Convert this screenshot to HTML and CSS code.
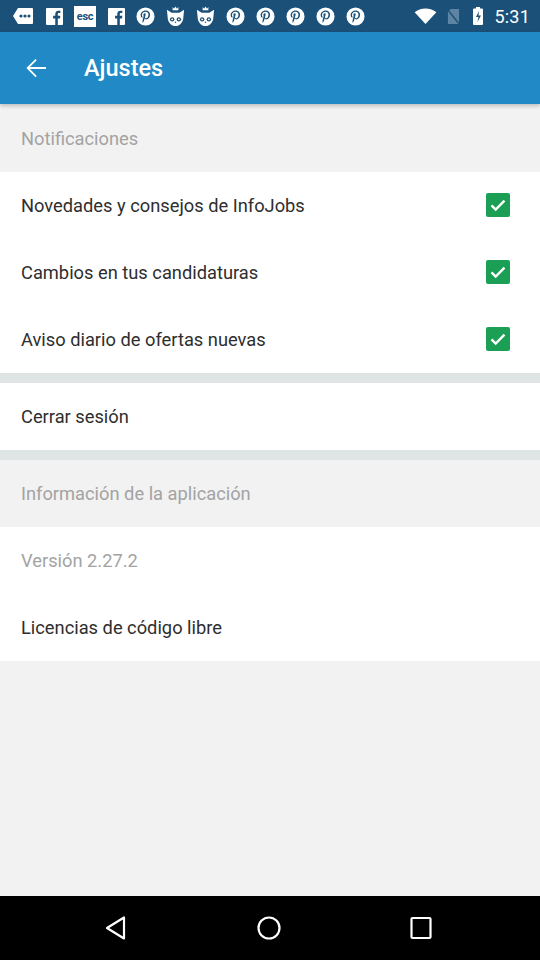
FILE: index.html
```html
<!DOCTYPE html>
<html lang="es">
<head>
<meta charset="utf-8">
<link rel="stylesheet" href="styles.css">
</head>
<body>
<div class="screen">
  <div class="statusbar">
    <div class="notif">
      <svg class="ic msg" viewBox="0 0 22 18"><path d="M6 1h14a1 1 0 0 1 1 1v14a1 1 0 0 1-1 1H6L1 9z" fill="#fff"/><circle cx="9" cy="9" r="1.6" fill="#1b5079"/><circle cx="13" cy="9" r="1.6" fill="#1b5079"/><circle cx="17" cy="9" r="1.6" fill="#1b5079"/></svg>
      <svg class="ic fb" viewBox="0 0 18 18"><rect width="18" height="18" rx="1" fill="#fff"/><path d="M12.5 18v-7h2.3l.4-2.7h-2.7V6.6c0-.8.2-1.3 1.3-1.3h1.4V2.9c-.3 0-1.1-.1-2-.1-2 0-3.4 1.2-3.4 3.5v2H7.5V11h2.3v7z" fill="#1b5079"/></svg>
      <div class="esc">esc</div>
      <svg class="ic fb" viewBox="0 0 18 18"><rect width="18" height="18" rx="1" fill="#fff"/><path d="M12.5 18v-7h2.3l.4-2.7h-2.7V6.6c0-.8.2-1.3 1.3-1.3h1.4V2.9c-.3 0-1.1-.1-2-.1-2 0-3.4 1.2-3.4 3.5v2H7.5V11h2.3v7z" fill="#1b5079"/></svg>
      <svg class="ic pin" viewBox="0 0 20 20"><circle cx="10" cy="10" r="9.5" fill="#fff"/><path d="M10.3 3.8c-3.6 0-5.4 2.6-5.4 4.7 0 1.3.5 2.4 1.5 2.8.2.1.3 0 .4-.2l.1-.6c.1-.2 0-.3-.1-.4-.3-.4-.5-.8-.5-1.5 0-1.9 1.4-3.6 3.7-3.6 2 0 3.1 1.2 3.1 2.9 0 2.2-1 4-2.4 4-.8 0-1.4-.7-1.2-1.5.2-1 .7-2 .7-2.7 0-.6-.3-1.1-1-1.1-.8 0-1.4.8-1.4 1.9 0 .7.2 1.2.2 1.2l-1 4.1c-.3 1.2 0 2.7 0 2.9 0 .1.1.1.2 0 .1-.1 1-1.3 1.3-2.5l.5-2c.3.5 1 .9 1.8.9 2.4 0 4-2.2 4-5.1 0-2.2-1.9-4.2-4.7-4.2z" fill="#1b5079"/></svg>
      <svg class="ic cat" viewBox="0 0 22 22"><path d="M8 1l1.5 2L11 .5 12.5 3 14 1v3.5H8z" fill="#fff"/><path d="M2 4l5 3h8l5-3-.8 8c0 5-4 9-8.2 9S2.8 17 2.8 12z" fill="#fff"/><circle cx="7.5" cy="14" r="2.3" fill="#1b5079"/><circle cx="14.5" cy="14" r="2.3" fill="#1b5079"/><circle cx="7.5" cy="14" r="1" fill="#fff"/><circle cx="14.5" cy="14" r="1" fill="#fff"/><circle cx="11" cy="17" r=".8" fill="#1b5079"/></svg>
      <svg class="ic cat" viewBox="0 0 22 22"><path d="M8 1l1.5 2L11 .5 12.5 3 14 1v3.5H8z" fill="#fff"/><path d="M2 4l5 3h8l5-3-.8 8c0 5-4 9-8.2 9S2.8 17 2.8 12z" fill="#fff"/><circle cx="7.5" cy="14" r="2.3" fill="#1b5079"/><circle cx="14.5" cy="14" r="2.3" fill="#1b5079"/><circle cx="7.5" cy="14" r="1" fill="#fff"/><circle cx="14.5" cy="14" r="1" fill="#fff"/><circle cx="11" cy="17" r=".8" fill="#1b5079"/></svg>
      <svg class="ic pin" viewBox="0 0 20 20"><circle cx="10" cy="10" r="9.5" fill="#fff"/><path d="M10.3 3.8c-3.6 0-5.4 2.6-5.4 4.7 0 1.3.5 2.4 1.5 2.8.2.1.3 0 .4-.2l.1-.6c.1-.2 0-.3-.1-.4-.3-.4-.5-.8-.5-1.5 0-1.9 1.4-3.6 3.7-3.6 2 0 3.1 1.2 3.1 2.9 0 2.2-1 4-2.4 4-.8 0-1.4-.7-1.2-1.5.2-1 .7-2 .7-2.7 0-.6-.3-1.1-1-1.1-.8 0-1.4.8-1.4 1.9 0 .7.2 1.2.2 1.2l-1 4.1c-.3 1.2 0 2.7 0 2.9 0 .1.1.1.2 0 .1-.1 1-1.3 1.3-2.5l.5-2c.3.5 1 .9 1.8.9 2.4 0 4-2.2 4-5.1 0-2.2-1.9-4.2-4.7-4.2z" fill="#1b5079"/></svg>
      <svg class="ic pin" viewBox="0 0 20 20"><circle cx="10" cy="10" r="9.5" fill="#fff"/><path d="M10.3 3.8c-3.6 0-5.4 2.6-5.4 4.7 0 1.3.5 2.4 1.5 2.8.2.1.3 0 .4-.2l.1-.6c.1-.2 0-.3-.1-.4-.3-.4-.5-.8-.5-1.5 0-1.9 1.4-3.6 3.7-3.6 2 0 3.1 1.2 3.1 2.9 0 2.2-1 4-2.4 4-.8 0-1.4-.7-1.2-1.5.2-1 .7-2 .7-2.7 0-.6-.3-1.1-1-1.1-.8 0-1.4.8-1.4 1.9 0 .7.2 1.2.2 1.2l-1 4.1c-.3 1.2 0 2.7 0 2.9 0 .1.1.1.2 0 .1-.1 1-1.3 1.3-2.5l.5-2c.3.5 1 .9 1.8.9 2.4 0 4-2.2 4-5.1 0-2.2-1.9-4.2-4.7-4.2z" fill="#1b5079"/></svg>
      <svg class="ic pin" viewBox="0 0 20 20"><circle cx="10" cy="10" r="9.5" fill="#fff"/><path d="M10.3 3.8c-3.6 0-5.4 2.6-5.4 4.7 0 1.3.5 2.4 1.5 2.8.2.1.3 0 .4-.2l.1-.6c.1-.2 0-.3-.1-.4-.3-.4-.5-.8-.5-1.5 0-1.9 1.4-3.6 3.7-3.6 2 0 3.1 1.2 3.1 2.9 0 2.2-1 4-2.4 4-.8 0-1.4-.7-1.2-1.5.2-1 .7-2 .7-2.7 0-.6-.3-1.1-1-1.1-.8 0-1.4.8-1.4 1.9 0 .7.2 1.2.2 1.2l-1 4.1c-.3 1.2 0 2.7 0 2.9 0 .1.1.1.2 0 .1-.1 1-1.3 1.3-2.5l.5-2c.3.5 1 .9 1.8.9 2.4 0 4-2.2 4-5.1 0-2.2-1.9-4.2-4.7-4.2z" fill="#1b5079"/></svg>
      <svg class="ic pin" viewBox="0 0 20 20"><circle cx="10" cy="10" r="9.5" fill="#fff"/><path d="M10.3 3.8c-3.6 0-5.4 2.6-5.4 4.7 0 1.3.5 2.4 1.5 2.8.2.1.3 0 .4-.2l.1-.6c.1-.2 0-.3-.1-.4-.3-.4-.5-.8-.5-1.5 0-1.9 1.4-3.6 3.7-3.6 2 0 3.1 1.2 3.1 2.9 0 2.2-1 4-2.4 4-.8 0-1.4-.7-1.2-1.5.2-1 .7-2 .7-2.7 0-.6-.3-1.1-1-1.1-.8 0-1.4.8-1.4 1.9 0 .7.2 1.2.2 1.2l-1 4.1c-.3 1.2 0 2.7 0 2.9 0 .1.1.1.2 0 .1-.1 1-1.3 1.3-2.5l.5-2c.3.5 1 .9 1.8.9 2.4 0 4-2.2 4-5.1 0-2.2-1.9-4.2-4.7-4.2z" fill="#1b5079"/></svg>
      <svg class="ic pin" viewBox="0 0 20 20"><circle cx="10" cy="10" r="9.5" fill="#fff"/><path d="M10.3 3.8c-3.6 0-5.4 2.6-5.4 4.7 0 1.3.5 2.4 1.5 2.8.2.1.3 0 .4-.2l.1-.6c.1-.2 0-.3-.1-.4-.3-.4-.5-.8-.5-1.5 0-1.9 1.4-3.6 3.7-3.6 2 0 3.1 1.2 3.1 2.9 0 2.2-1 4-2.4 4-.8 0-1.4-.7-1.2-1.5.2-1 .7-2 .7-2.7 0-.6-.3-1.1-1-1.1-.8 0-1.4.8-1.4 1.9 0 .7.2 1.2.2 1.2l-1 4.1c-.3 1.2 0 2.7 0 2.9 0 .1.1.1.2 0 .1-.1 1-1.3 1.3-2.5l.5-2c.3.5 1 .9 1.8.9 2.4 0 4-2.2 4-5.1 0-2.2-1.9-4.2-4.7-4.2z" fill="#1b5079"/></svg>
    </div>
    <div class="sys">
      <svg class="wifi" viewBox="0 0 24 18"><path d="M12 17L.5 4.5C3.5 2 7.5.5 12 .5s8.5 1.5 11.5 4z" fill="#fff"/></svg>
      <svg class="sim" viewBox="0 0 14 18"><path d="M4 1h9v16H1V4z" fill="#5d84a3"/><path d="M1 2l12 15" stroke="#1b5079" stroke-width="1.5"/></svg>
      <svg class="bat" viewBox="0 0 10 18"><rect x="3" y="0" width="4" height="2" fill="#fff"/><rect x="0" y="1.5" width="10" height="16.5" rx="1" fill="#fff"/><path d="M6 4L3 10h2.5l-1 5L8 8.5H5.5z" fill="#1b5079"/></svg>
      <span class="time">5:31</span>
    </div>
  </div>
  <header class="appbar">
    <svg class="back" viewBox="0 0 24 24"><path d="M20 11.2H7.1l5.5-5.5-1-1L4.3 12l7.3 7.3 1-1-5.5-5.5H20z" fill="#fff"/></svg>
    <h1 class="title">Ajustes</h1>
  </header>
  <main class="content">
    <div class="section-head">Notificaciones</div>
    <div class="row">
      <span class="label">Novedades y consejos de InfoJobs</span>
      <span class="check"><svg viewBox="0 0 24 24"><path d="M5.5 12.3l4.2 4.2 8.8-8.8" fill="none" stroke="#fff" stroke-width="2.4"/></svg></span>
    </div>
    <div class="row">
      <span class="label">Cambios en tus candidaturas</span>
      <span class="check"><svg viewBox="0 0 24 24"><path d="M5.5 12.3l4.2 4.2 8.8-8.8" fill="none" stroke="#fff" stroke-width="2.4"/></svg></span>
    </div>
    <div class="row">
      <span class="label">Aviso diario de ofertas nuevas</span>
      <span class="check"><svg viewBox="0 0 24 24"><path d="M5.5 12.3l4.2 4.2 8.8-8.8" fill="none" stroke="#fff" stroke-width="2.4"/></svg></span>
    </div>
    <div class="divider"></div>
    <div class="row"><span class="label">Cerrar sesión</span></div>
    <div class="divider"></div>
    <div class="section-head">Información de la aplicación</div>
    <div class="row"><span class="label muted">Versión 2.27.2</span></div>
    <div class="row"><span class="label">Licencias de código libre</span></div>
  </main>
  <nav class="navbar">
    <svg class="nav-ic" viewBox="0 0 24 26"><path d="M20 2.5v21L3 13z" fill="none" stroke="#fff" stroke-width="2.2" stroke-linejoin="round"/></svg>
    <svg class="nav-ic" viewBox="0 0 24 26"><circle cx="12" cy="13" r="10.5" fill="none" stroke="#fff" stroke-width="2.2"/></svg>
    <svg class="nav-ic" viewBox="0 0 24 26"><rect x="2.5" y="3" width="19" height="20" rx="1" fill="none" stroke="#fff" stroke-width="2.2"/></svg>
  </nav>
</div>
</body>
</html>
```

FILE: styles.css
```css
* { box-sizing: border-box; }
html, body { margin: 0; padding: 0; }
body {
  font-family: Roboto, "Noto Sans", "Liberation Sans", sans-serif;
  background: #f2f2f2;
}
.screen {
  width: 540px;
  height: 960px;
  display: flex;
  flex-direction: column;
  background: #f2f2f2;
  overflow: hidden;
}
.statusbar {
  height: 32px;
  flex: none;
  background: #1b5079;
  display: flex;
  align-items: center;
  justify-content: space-between;
  padding: 0 10px 0 12px;
  color: #fff;
}
.notif {
  display: flex;
  align-items: center;
  gap: 11px;
}
.ic { display: block; }
.msg { width: 22px; height: 18px; }
.fb { width: 17px; height: 17px; margin-left: 1px; }
.esc {
  width: 22px;
  height: 21px;
  background: #fff;
  color: #1b5079;
  font-size: 11px;
  font-weight: 700;
  line-height: 21px;
  text-align: center;
  letter-spacing: -0.3px;
}
.pin { width: 19px; height: 19px; }
.cat { width: 21px; height: 21px; margin: 0 -1px; }
.sys {
  display: flex;
  align-items: center;
}
.wifi { width: 23px; height: 17px; margin-right: 10px; }
.sim { width: 13px; height: 17px; margin-right: 13px; }
.bat { width: 10px; height: 18px; margin-right: 11px; }
.time {
  font-size: 18px;
  letter-spacing: 0.2px;
}
.appbar {
  height: 72px;
  flex: none;
  background: #2189c6;
  display: flex;
  align-items: center;
  padding-left: 21px;
  box-shadow: 0 2px 4px rgba(0,0,0,0.22);
  position: relative;
  z-index: 1;
}
.back { width: 30px; height: 30px; }
.title {
  margin: 0 0 0 33px;
  font-size: 23.5px;
  font-weight: 500;
  color: #fff;
}
.content {
  flex: 1;
  display: flex;
  flex-direction: column;
  background: #f2f2f2;
}
.section-head {
  height: 67px;
  display: flex;
  align-items: center;
  padding-left: 21px;
  font-size: 18.3px;
  color: #a3a3a3;
  background: #f2f2f2;
}
.section-head:first-child { height: 68px; }
.row {
  height: 67px;
  display: flex;
  align-items: center;
  justify-content: space-between;
  padding: 0 30px 0 21px;
  background: #fff;
}
.label {
  font-size: 18.3px;
  font-weight: 400;
  color: #2e2e2e;
}
.label.muted { color: #a3a3a3; }
.check {
  width: 24px;
  height: 24px;
  border-radius: 2px;
  background: #1a9f55;
  display: flex;
  margin-top: -2px;
}
.check svg { width: 24px; height: 24px; }
.divider {
  height: 10px;
  background: #dfe4e4;
}
.navbar {
  height: 64px;
  flex: none;
  background: #000;
  display: flex;
  align-items: center;
  justify-content: space-between;
  padding: 0 107px 0 104px;
}
.nav-ic { width: 24px; height: 26px; }
```
